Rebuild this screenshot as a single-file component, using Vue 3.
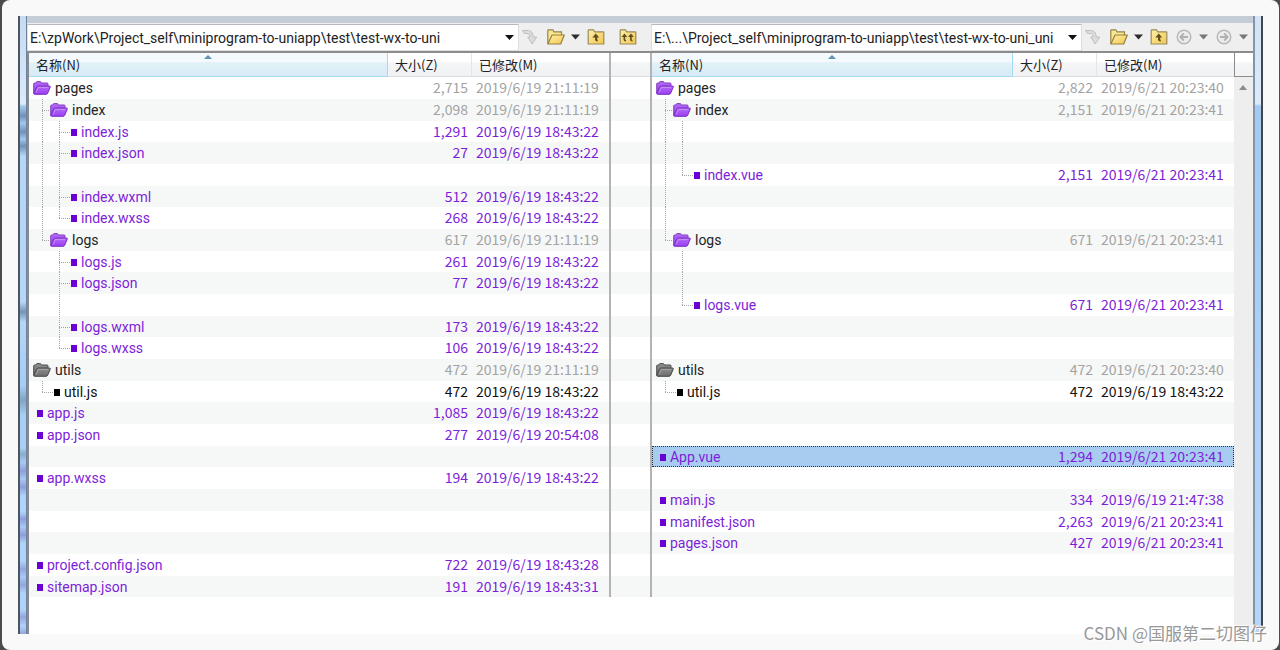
<script setup>
const stamp = '2019/6/19 18:43:22'
const leftDir = '2019/6/19 21:11:19'
const rightStamp = '2019/6/21 20:23:41'

const row = (guides, kind, name, size, date, tone, selected = false) => ({ guides, kind, name, size, date, tone, selected })
const blank = (guides = '') => row(guides, '', '', '', '', '')

// guides: one letter per indent level (v = line, t = tee, l = elbow, n = nothing)
const panes = [
  {
    id: 'left',
    path: 'E:\\zpWork\\Project_self\\miniprogram-to-uniapp\\test\\test-wx-to-uni',
    rows: [
      row('', 'folder', 'pages', '2,715', leftDir, 'violet'),
      row('t', 'folder', 'index', '2,098', leftDir, 'violet'),
      row('vt', 'file', 'index.js', '1,291', stamp, 'violet'),
      row('vt', 'file', 'index.json', '27', stamp, 'violet'),
      blank('vv'),
      row('vt', 'file', 'index.wxml', '512', stamp, 'violet'),
      row('vl', 'file', 'index.wxss', '268', stamp, 'violet'),
      row('l', 'folder', 'logs', '617', leftDir, 'violet'),
      row('nt', 'file', 'logs.js', '261', stamp, 'violet'),
      row('nt', 'file', 'logs.json', '77', stamp, 'violet'),
      blank('nv'),
      row('nt', 'file', 'logs.wxml', '173', stamp, 'violet'),
      row('nl', 'file', 'logs.wxss', '106', stamp, 'violet'),
      row('', 'folder', 'utils', '472', leftDir, 'plain'),
      row('l', 'file', 'util.js', '472', stamp, 'plain'),
      row('', 'file', 'app.js', '1,085', stamp, 'violet'),
      row('', 'file', 'app.json', '277', '2019/6/19 20:54:08', 'violet'),
      blank(),
      row('', 'file', 'app.wxss', '194', stamp, 'violet'),
      blank(),
      blank(),
      blank(),
      row('', 'file', 'project.config.json', '722', '2019/6/19 18:43:28', 'violet'),
      row('', 'file', 'sitemap.json', '191', '2019/6/19 18:43:31', 'violet')
    ]
  },
  {
    id: 'right',
    path: 'E:\\...\\Project_self\\miniprogram-to-uniapp\\test\\test-wx-to-uni_uni',
    rows: [
      row('', 'folder', 'pages', '2,822', '2019/6/21 20:23:40', 'violet'),
      row('t', 'folder', 'index', '2,151', rightStamp, 'violet'),
      blank('vv'),
      blank('vv'),
      row('vl', 'file', 'index.vue', '2,151', rightStamp, 'violet'),
      blank('v'),
      blank('v'),
      row('l', 'folder', 'logs', '671', rightStamp, 'violet'),
      blank('nv'),
      blank('nv'),
      row('nl', 'file', 'logs.vue', '671', rightStamp, 'violet'),
      blank(),
      blank(),
      row('', 'folder', 'utils', '472', '2019/6/21 20:23:40', 'plain'),
      row('l', 'file', 'util.js', '472', stamp, 'plain'),
      blank(),
      blank(),
      row('', 'file', 'App.vue', '1,294', rightStamp, 'violet', true),
      blank(),
      row('', 'file', 'main.js', '334', '2019/6/19 21:47:38', 'violet'),
      row('', 'file', 'manifest.json', '2,263', rightStamp, 'violet'),
      row('', 'file', 'pages.json', '427', rightStamp, 'violet'),
      blank(),
      blank()
    ]
  }
]

const tools = {
  left: [
    { icon: 'swap', label: 'Apply path' },
    { icon: 'open', label: 'Browse' },
    { icon: 'caret', label: 'Browse history' },
    { icon: 'up', label: 'Up one level' },
    { icon: 'upup', label: 'Up both sides' }
  ],
  right: [
    { icon: 'swap', label: 'Apply path' },
    { icon: 'open', label: 'Browse' },
    { icon: 'caret', label: 'Browse history' },
    { icon: 'up', label: 'Up one level' },
    { icon: 'back', label: 'Back' },
    { icon: 'caret', label: 'Back history', dim: true },
    { icon: 'forward', label: 'Forward' },
    { icon: 'caret', label: 'Forward history', dim: true }
  ]
}
</script>

<template>
  <svg class="defs" aria-hidden="true">
    <defs>
      <linearGradient id="gold" x1="0" y1="0" x2="1" y2="1">
        <stop offset="0" stop-color="#fff0a8" />
        <stop offset="1" stop-color="#f1c650" />
      </linearGradient>
      <linearGradient id="violet" x1="0" y1="0" x2="0" y2="1">
        <stop offset="0" stop-color="#b36cf6" />
        <stop offset="1" stop-color="#9a3df2" />
      </linearGradient>
      <linearGradient id="plain" x1="0" y1="0" x2="0" y2="1">
        <stop offset="0" stop-color="#8f8f8f" />
        <stop offset="1" stop-color="#6c6c6c" />
      </linearGradient>
    </defs>
  </svg>

  <div class="page">
    <main class="window">
      <div class="edge edge-left"></div>
      <div class="content">
        <div class="strip"></div>

        <div class="toolbar">
          <div v-for="pane in panes" :key="pane.id" class="bar" :class="pane.id">
            <div class="combo">
              <select :aria-label="pane.id + ' folder path'">
                <option>{{ pane.path }}</option>
              </select>
              <svg class="combo-arrow" width="9" height="5" viewBox="0 0 9 5"><path d="M0 0h9L4.5 5z" fill="#111" /></svg>
            </div>
            <button
              v-for="tool in tools[pane.id]"
              :key="tool.label"
              type="button"
              class="tool"
              :class="[tool.icon, { dim: tool.dim }]"
              :aria-label="tool.label"
            >
              <svg v-if="tool.icon === 'swap'" width="18" height="18" viewBox="0 0 18 18">
                <path d="M1.500 2.500H6c4.500 0 6 2 6 6.500h3.700L11.200 16 6.800 9H9c0-2.500-.8-3.500-3-3.500H3.500z" fill="#dcdcdc" stroke="#bfbfbf" stroke-linejoin="round" />
              </svg>
              <svg v-else-if="tool.icon === 'open'" width="18" height="16" viewBox="0 0 18 16">
                <path d="M.8 14.700V1.500Q.8.800 1.500.800h4.300l1.200 2h7.500v3.700" fill="#fbe78f" stroke="#94844f" stroke-width="1.200" />
                <path d="M.9 15 5 6h12.300l-3.600 9z" fill="url(#gold)" stroke="#94803f" stroke-width="1.200" stroke-linejoin="round" />
              </svg>
              <svg v-else-if="tool.icon === 'caret'" width="9" height="6" viewBox="0 0 9 6">
                <path d="M0 .5h9L4.500 5.500z" fill="currentColor" />
              </svg>
              <svg v-else-if="tool.icon === 'up' || tool.icon === 'upup'" width="18" height="16" viewBox="0 0 18 16">
                <path d="M1.200 15V1.500q0-.7.700-.700h4.600l1.200 2h8.600q.5 0 .5.500V15z" fill="url(#gold)" stroke="#9a8b5b" stroke-width="1.200" />
                <path v-if="tool.icon === 'up'" d="M8.800 4.500 5.300 8.500H8v2.300q0 1.700 2.800 1.700V11q-.6 0-.6-.8V8.500h2z" fill="#5f501f" />
                <g v-else fill="#5f501f">
                  <path d="M5.500 4.500 2.500 8h2v2.500q0 2 2.500 2V11q-.8 0-.8-.8V8h2.100z" />
                  <path d="M12 4.500 9 8h2v2.500q0 2 2.500 2V11q-.8 0-.8-.8V8h2.100z" />
                </g>
              </svg>
              <svg v-else width="16" height="16" viewBox="0 0 16 16" :class="{ mirrored: tool.icon === 'forward' }">
                <circle cx="8" cy="8" r="6.800" fill="#ececec" stroke="#b7b7b7" stroke-width="1.400" />
                <path d="M12 8H5M7.800 4.500 4.300 8l3.500 3.500" fill="none" stroke="#b0b0b0" stroke-width="1.800" />
              </svg>
            </button>
          </div>
        </div>

        <div class="compare">
          <template v-for="(pane, index) in panes" :key="pane.id">
            <section class="pane" :class="pane.id">
              <table>
                <colgroup>
                  <col />
                  <col class="col-size" />
                  <col class="col-date" />
                </colgroup>
                <thead>
                  <tr>
                    <th scope="col" class="sorted">
                      名称(N)
                      <svg class="sort" width="8" height="4" viewBox="0 0 8 4"><path d="M0 4 4 0l4 4z" fill="#5d94b3" /></svg>
                    </th>
                    <th scope="col">大小(Z)</th>
                    <th scope="col">已修改(M)</th>
                  </tr>
                </thead>
                <tbody>
                  <tr v-for="(item, i) in pane.rows" :key="i" :class="[item.kind, item.tone, { selected: item.selected }]">
                    <td>
                      <div class="cell">
                        <span v-for="(guide, g) in item.guides" :key="g" class="guide" :class="'guide-' + guide"></span>
                        <svg v-if="item.kind === 'folder'" class="folder-icon" width="18" height="14" viewBox="0 0 18 14">
                          <path
                            d="M.7 12.500V3q0-1 1-1h1.100l1-1.400h3.700l1 1.400h5.700q.8 0 .8.800v2"
                            :fill="`url(#${item.tone})`"
                            :stroke="item.tone === 'violet' ? '#8440bd' : '#4d4d4d'"
                          />
                          <path
                            d="M1.700 13.300q-1.300 0-.8-1.300L3.700 6q.4-1 1.500-1h11.200q1.300 0 .8 1.200l-2.500 6q-.5 1.100-1.600 1.100z"
                            :fill="`url(#${item.tone})`"
                            :stroke="item.tone === 'violet' ? '#7a2ec0' : '#484848'"
                          />
                          <path d="m3.200 11.500 2.200-5h9.500" fill="none" :stroke="item.tone === 'violet' ? '#c48afa' : '#a2a2a2'" />
                        </svg>
                        <template v-else-if="item.kind === 'file'">
                          <span class="stub" :class="{ dotted: item.guides }"></span>
                          <span class="bullet"></span>
                        </template>
                        <span class="name">{{ item.name }}</span>
                      </div>
                    </td>
                    <td class="size">{{ item.size }}</td>
                    <td class="date">{{ item.date }}</td>
                  </tr>
                </tbody>
              </table>
            </section>
            <div v-if="index === 0" class="gutter"></div>
          </template>
          <div class="scroll">
            <div class="scroll-head"></div>
            <button type="button" class="scroll-up" aria-label="Scroll up">
              <svg width="8" height="5" viewBox="0 0 8 5"><path d="M0 5 4 0l4 5z" fill="#8b8b8b" /></svg>
            </button>
          </div>
        </div>
      </div>
      <div class="edge edge-right"></div>
    </main>
    <p class="watermark">CSDN @国服第二切图仔</p>
  </div>
</template>

<style>
html {
  background: #4b4b4b;
}
body {
  margin: 0;
}
</style>

<style scoped>
.defs {
  position: absolute;
  width: 0;
  height: 0;
}
.page {
  position: relative;
  box-sizing: border-box;
  min-height: 100vh;
  margin: 0 1px 0 2px;
  padding: 16px;
  border-radius: 8px;
  background: #f9f9f9;
  color: #222;
  font-family: "Noto Sans CJK SC", sans-serif;
  font-size: 14px;
  line-height: 20px;
}
.window {
  display: flex;
  background: #fff;
}
.edge {
  flex: none;
  box-sizing: border-box;
  width: 9px;
  border-left: 2px solid #4c545e;
  border-right: 1px solid #70839a;
  background: linear-gradient(#d3e3f4 0, #dceafa 88px, #a5caf0 90px, #b5d6f8 100%);
}
.edge-left {
  background: linear-gradient(
    #c6daf2 0, #dceafa 88px, #a5caf0 90px, #7192b6 100px, #a3c7ee 107px, #7192b6 116px, #a3c7ee 123px,
    #7192b6 130px, #b5d6f8 140px, #b5d6f8 286px, #7595b4 296px, #b5d6f8 306px, #a7cdf2 370px,
    #82a5c2 384px, #a9d0f4 400px, #a9d0f4 432px, #89adc9 438px, #a9c9f4 446px, #8e9fdb 455px,
    #a9c9f4 463px, #8e9fdb 471px, #b0d3f8 480px, #b0d3f8 496px, #8e9fdb 503px, #a9c9f4 511px,
    #8e9fdb 519px, #b0d3f8 527px, #b0d3f8 545px, #93a6de 553px, #a9c9f4 561px, #93a6de 569px,
    #b0d3f8 577px, #b0d3f8 594px, #93a6de 601px, #b0d3f8 610px, #93a6de 100%
  );
}
.edge-right {
  width: 10px;
  border-left: 2px solid #8295ab;
  border-right: 2px solid #3f464e;
}
.content {
  flex: 1;
  min-width: 0;
}
.strip {
  height: 7px;
  background: #c4cdd7;
}

.toolbar {
  display: grid;
  grid-template-columns: 624fr 602fr;
  border-bottom: 2px solid #8c8c8c;
  background: #efefef;
}
.bar {
  display: flex;
  align-items: center;
  min-width: 0;
  padding-right: 2px;
}
.bar.left {
  padding-right: 12px;
}
.combo {
  display: grid;
  flex: 1;
  align-items: center;
  min-width: 0;
  box-sizing: border-box;
  height: 27px;
  margin-top: 1px;
  border: 1px solid #dedede;
  border-top-color: #b5bac0;
  background: #fff;
}
.combo select {
  grid-area: 1 / 1;
  width: 100%;
  height: 25px;
  padding: 0 16px 0 2px;
  border: 0;
  outline: 0;
  appearance: none;
  background: transparent;
  color: #222;
  font-family: Roboto, sans-serif;
  font-size: 14px;
}
.combo-arrow {
  grid-area: 1 / 1;
  justify-self: end;
  margin-right: 4px;
  pointer-events: none;
}
.tool {
  display: flex;
  flex: none;
  align-items: center;
  justify-content: center;
  width: 22px;
  height: 24px;
  padding: 0;
  border: 0;
  background: none;
  color: #2d2d2d;
}
.tool.open {
  margin-left: 4px;
}
.tool.up,
.tool.forward {
  margin-left: 2px;
}
.tool.back {
  margin-left: 3px;
}
.tool.upup {
  margin-left: 10px;
}
.tool.caret {
  width: 16px;
}
.tool.dim {
  color: #777;
}
.mirrored {
  transform: scaleX(-1);
}

.compare {
  display: grid;
  grid-template-columns: 581fr 39px 583fr 19px;
  align-items: start;
  border-left: 2px solid #858b91;
  background: #fff;
}
.pane,
.gutter {
  box-sizing: border-box;
  background: repeating-linear-gradient(
    #fff 0 22px, #f6f8f8 22px 44px, #fff 44px 65px, #f6f8f8 65px 87px, #fff 87px 109px, #f6f8f8 109px 130px
  ) 0 24px no-repeat;
}
.pane.left {
  border-right: 2px solid #b3b3b3;
}
.pane.right {
  border-left: 2px solid #b3b3b3;
}
.gutter {
  align-self: start;
  height: 544px;
}
.gutter::before {
  display: block;
  box-sizing: border-box;
  height: 24px;
  border-bottom: 1px solid #dadde0;
  background: linear-gradient(#fff 0 40%, #f4f5f7 42%, #f1f2f4);
  content: "";
}
table {
  width: 100%;
  border-collapse: separate;
  border-spacing: 0;
  table-layout: fixed;
}
.col-size {
  width: 84px;
}
.col-date {
  width: 137px;
}
th {
  box-sizing: border-box;
  height: 24px;
  padding: 0 0 0 7px;
  border-bottom: 1px solid #dadde0;
  border-right: 1px solid #e3e5e8;
  background: linear-gradient(#fff 0 40%, #f4f5f7 42%, #f1f2f4);
  font-size: 13px;
  font-weight: 400;
  text-align: left;
}
th:last-child {
  border-right: 0;
}
th.sorted {
  position: relative;
  border-color: #a5dbf2;
  background: linear-gradient(#f3f9fc 0 40%, #e1f1f8 42%, #d7ebf5);
}
.sort {
  position: absolute;
  top: 2px;
  left: calc(50% - 4px);
}
td {
  box-sizing: border-box;
  height: 22px;
  padding: 0;
  white-space: nowrap;
}
tr:nth-child(3n) td {
  height: 21px;
}
tbody tr {
  line-height: 18px;
}
.file.violet {
  color: #7d1ed8;
}
.file.plain {
  color: #111;
}
.folder .size,
.folder .date {
  color: #a3a3a3;
}
.size,
.date {
  padding-bottom: 2px;
}
.size {
  padding-right: 4px;
  text-align: right;
}
.date {
  padding-left: 4px;
}
.cell {
  display: flex;
  align-items: center;
  height: 100%;
  padding-left: 4px;
}
.guide {
  --down: repeating-linear-gradient(#a5a5a5 0 1px, transparent 1px 2px);
  --across: repeating-linear-gradient(90deg, #a5a5a5 0 1px, transparent 1px 2px);
  flex: none;
  align-self: stretch;
  width: 17px;
  background-repeat: no-repeat;
}
.guide-v {
  background-image: var(--down);
  background-position: 9px 0;
  background-size: 1px 100%;
}
.guide-t {
  background-image: var(--down), var(--across);
  background-position: 9px 0, 9px 11px;
  background-size: 1px 100%, 8px 1px;
}
.guide-l {
  background-image: var(--down), var(--across);
  background-position: 9px 0, 9px 11px;
  background-size: 1px 11px, 8px 1px;
}
.stub {
  flex: none;
  align-self: stretch;
  width: 3px;
}
.stub.dotted {
  background: repeating-linear-gradient(90deg, #a5a5a5 0 1px, transparent 1px 2px) 0 11px / 3px 1px no-repeat;
}
.bullet {
  flex: none;
  width: 6px;
  height: 7px;
  margin: 1px 4px 0 1px;
  background: #6a00d4;
}
.plain .bullet {
  background: #000;
}
.folder-icon {
  flex: none;
  margin-right: 4px;
}
.name {
  font-family: Roboto, sans-serif;
}
.selected {
  outline: 1px dotted #333;
  outline-offset: -1px;
}
.selected td {
  background: #a8cbf0;
}
.scroll {
  align-self: stretch;
  min-height: 581px;
  background: #eee;
}
.scroll-head {
  box-sizing: border-box;
  height: 24px;
  border-left: 1px solid #8c8c8c;
  border-bottom: 1px solid #8c8c8c;
  background: linear-gradient(#fff 0 40%, #f4f5f7 42%, #f1f2f4);
}
.scroll-up {
  display: flex;
  align-items: center;
  justify-content: center;
  width: 100%;
  height: 20px;
  padding: 0;
  border: 0;
  background: none;
}
.watermark {
  position: absolute;
  right: 12px;
  bottom: 5px;
  margin: 0;
  color: #989898;
  font-size: 17px;
  line-height: 24px;
  text-shadow: 1px 1px 0 #fff, -1px -1px 0 #fff;
}
</style>
